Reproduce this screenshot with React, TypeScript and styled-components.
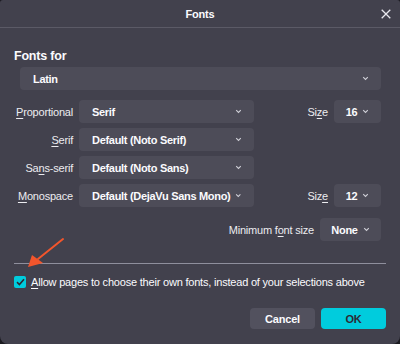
import React from "react";
import styled, { createGlobalStyle } from "styled-components";

const GlobalStyle = createGlobalStyle`
  html, body {
    margin: 0;
    padding: 0;
    background: #1b1a20;
  }
  body {
    font-family: "Liberation Sans", Arial, sans-serif;
    font-size: 11px;
    letter-spacing: -0.2px;
    color: #fbfbfe;
  }
`;

const S = {
  Window: styled.div`
    position: relative;
    width: 400px;
    height: 344px;
    background: #42414d;
    border-radius: 3px 3px 8px 8px;
    overflow: hidden;
    display: flex;
    flex-direction: column;
  `,
  TitleBar: styled.div`
    height: 27px;
    border-bottom: 1px solid #5b5a66;
    display: flex;
    align-items: center;
    justify-content: center;
    position: relative;
    font-size: 11px;
    font-weight: 700;
  `,
  Close: styled.button`
    position: absolute;
    right: 9px;
    top: 9px;
    width: 10px;
    height: 10px;
    padding: 0;
    border: 0;
    background: none;
    display: flex;
  `,
  Body: styled.div`
    flex: 1;
    padding: 19px 14px 15px 14px;
    display: flex;
    flex-direction: column;
  `,
  Heading: styled.div`
    font-size: 12.5px;
    font-weight: 700;
    line-height: 18px;
  `,
  Select: styled.div<{ $w?: number; $center?: boolean }>`
    box-sizing: border-box;
    height: 23px;
    width: ${(p) => (p.$w ? `${p.$w}px` : "auto")};
    background: #4d4c58;
    border-radius: 4px;
    display: flex;
    align-items: center;
    justify-content: ${(p) => (p.$center ? "center" : "space-between")};
    gap: 5px;
    padding: ${(p) => (p.$center ? "0" : "0 12px 0 13px")};
    font-size: 11px;
    font-weight: 700;
    letter-spacing: -0.3px;
    white-space: nowrap;
  `,
  Latin: styled.div`
    margin: 2px 5px 0 6px;
  `,
  Grid: styled.div`
    margin-top: 10px;
    display: grid;
    grid-template-columns: 59px 175px 1fr auto 47px;
    column-gap: 6px;
    row-gap: 5px;
    align-items: center;
    padding-right: 5px;
  `,
  Label: styled.div`
    justify-self: end;
    text-align: right;
    white-space: nowrap;
    color: #ececf0;
  `,
  MinRow: styled.div`
    margin-top: 11px;
    padding-right: 5px;
    display: flex;
    justify-content: flex-end;
    align-items: center;
    gap: 6px;
  `,
  Rule: styled.div`
    margin-top: 22px;
    height: 1px;
    background: #8f8f9d;
  `,
  CheckRow: styled.label`
    margin-top: 11px;
    display: flex;
    align-items: center;
    gap: 5px;
    line-height: 14px;
    white-space: nowrap;
  `,
  Box: styled.span`
    flex: none;
    width: 12px;
    height: 12px;
    border-radius: 2px;
    background: #00ccdd;
    display: flex;
    align-items: center;
    justify-content: center;
  `,
  Footer: styled.div`
    margin-top: auto;
    display: flex;
    justify-content: flex-end;
    gap: 6px;
  `,
  Button: styled.button<{ $primary?: boolean }>`
    width: 65px;
    height: 21px;
    border: 0;
    border-radius: 4px;
    font-family: inherit;
    font-size: 11px;
    font-weight: 700;
    letter-spacing: -0.2px;
    color: ${(p) => (p.$primary ? "#2b2a33" : "#fbfbfe")};
    background: ${(p) => (p.$primary ? "#00ccdd" : "#52515e")};
  `,
  Arrow: styled.svg`
    position: absolute;
    left: 0;
    top: 0;
    pointer-events: none;
  `,
};

const Mn = styled.span`
  text-decoration: underline;
  text-underline-offset: 2px;
`;

const Chevron = () => (
  <svg width="7" height="5" viewBox="0 0 7 5">
    <path d="M1.2 1.2l2.3 2.3 2.3-2.3" fill="none" stroke="#d0d0d8" strokeWidth="1.1" />
  </svg>
);

const Dropdown = ({ text, w }: { text: string; w?: number }) => (
  <S.Select $w={w}>
    <span>{text}</span>
    <Chevron />
  </S.Select>
);

const SizeBox = ({ text, w }: { text: string; w: number }) => (
  <S.Select $w={w} $center>
    <span>{text}</span>
    <Chevron />
  </S.Select>
);

export default function App() {
  return (
    <>
      <GlobalStyle />
      <S.Window>
        <S.TitleBar>
          Fonts
          <S.Close>
            <svg width="10" height="10" viewBox="0 0 10 10">
              <path d="M0.7 0.7l8.6 8.6M9.3 0.7L0.7 9.3" stroke="#e8e8ee" strokeWidth="1.3" />
            </svg>
          </S.Close>
        </S.TitleBar>
        <S.Body>
          <S.Heading>Fonts for</S.Heading>
          <S.Latin>
            <Dropdown text="Latin" />
          </S.Latin>
          <S.Grid>
            <S.Label>
              <Mn>P</Mn>roportional
            </S.Label>
            <Dropdown text="Serif" w={175} />
            <span />
            <S.Label>
              Si<Mn>z</Mn>e
            </S.Label>
            <SizeBox text="16" w={47} />

            <S.Label>
              <Mn>S</Mn>erif
            </S.Label>
            <Dropdown text="Default (Noto Serif)" w={175} />
            <span />
            <span />
            <span />

            <S.Label>
              Sa<Mn>n</Mn>s-serif
            </S.Label>
            <Dropdown text="Default (Noto Sans)" w={175} />
            <span />
            <span />
            <span />

            <S.Label>
              <Mn>M</Mn>onospace
            </S.Label>
            <Dropdown text="Default (DejaVu Sans Mono)" w={175} />
            <span />
            <S.Label>
              Siz<Mn>e</Mn>
            </S.Label>
            <SizeBox text="12" w={47} />
          </S.Grid>
          <S.MinRow>
            <S.Label>
              Minimum f<Mn>o</Mn>nt size
            </S.Label>
            <SizeBox text="None" w={61} />
          </S.MinRow>
          <S.Rule />
          <S.CheckRow>
            <S.Box>
              <svg width="9" height="8" viewBox="0 0 9 8">
                <path d="M1 4.2l2.4 2.3L8 1.3" fill="none" stroke="#2b2a33" strokeWidth="1.6" />
              </svg>
            </S.Box>
            <span>
              <Mn>A</Mn>llow pages to choose their own fonts, instead of your selections above
            </span>
          </S.CheckRow>
          <S.Footer>
            <S.Button>Cancel</S.Button>
            <S.Button $primary>OK</S.Button>
          </S.Footer>
        </S.Body>
        <S.Arrow width="400" height="344" viewBox="0 0 400 344">
          <path d="M63 239L38 259" stroke="#f2552c" strokeWidth="2" strokeLinecap="round" />
          <path d="M28 267L32 255L43 263Z" fill="#f2552c" />
        </S.Arrow>
      </S.Window>
    </>
  );
}
